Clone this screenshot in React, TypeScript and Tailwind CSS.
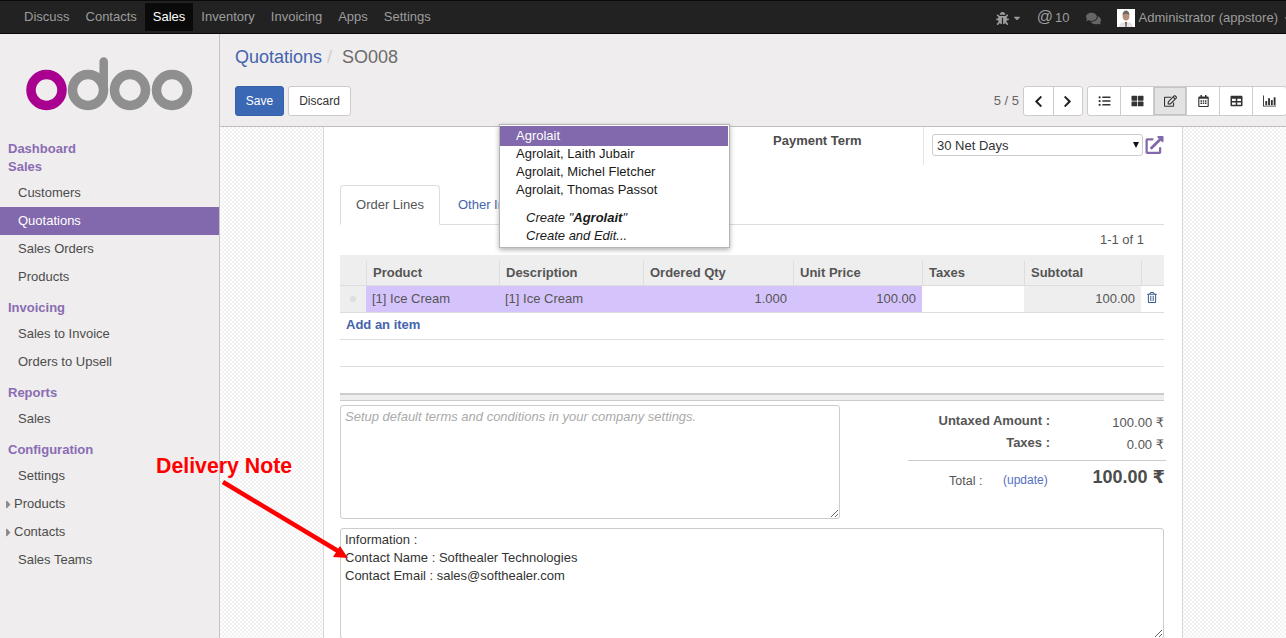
import {
  FaBug,
  FaCaretDown,
  FaCaretRight,
  FaComments,
  FaChevronLeft,
  FaChevronRight,
  FaListUl,
  FaThLarge,
  FaRegEdit,
  FaRegCalendarAlt,
  FaTable,
  FaExternalLinkAlt,
  FaRegTrashAlt,
} from "react-icons/fa";

const topMenu = ["Discuss", "Contacts", "Sales", "Inventory", "Invoicing", "Apps", "Settings"];

function BarChartIcon({ className }: { className?: string }) {
  return (
    <svg viewBox="0 0 14 12" className={className} fill="currentColor">
      <path d="M0 0h1v11h13v1H0z" />
      <rect x="2.500" y="6" width="2" height="4.500" />
      <rect x="5.500" y="3" width="2" height="7.500" />
      <rect x="8.500" y="5" width="2" height="5.500" />
      <rect x="11.500" y="2" width="2" height="8.500" />
    </svg>
  );
}

const views = [
  { icon: FaListUl, active: false },
  { icon: FaThLarge, active: false },
  { icon: FaRegEdit, active: true },
  { icon: FaRegCalendarAlt, active: false },
  { icon: FaTable, active: false },
  { icon: BarChartIcon, active: false },
];

const columns = ["", "Product", "Description", "Ordered Qty", "Unit Price", "Taxes", "Subtotal", ""];

function Logo() {
  return (
    <svg width="168" height="56" viewBox="0 0 168 56" className="block">
      <circle cx="20.5" cy="35" r="15.5" fill="none" stroke="#a9008f" strokeWidth="9.5" />
      <circle cx="62" cy="35" r="15.5" fill="none" stroke="#8f8f8f" strokeWidth="9.5" />
      <line x1="77.7" y1="35" x2="77.7" y2="6.5" stroke="#8f8f8f" strokeWidth="8.5" strokeLinecap="round" />
      <circle cx="104" cy="35" r="15.5" fill="none" stroke="#8f8f8f" strokeWidth="9.5" />
      <circle cx="146" cy="35" r="15.5" fill="none" stroke="#8f8f8f" strokeWidth="9.5" />
    </svg>
  );
}

function Avatar() {
  return (
    <svg width="18" height="18" viewBox="0 0 18 18" className="block">
      <rect width="18" height="18" fill="#ffffff" />
      <path d="M2 18c0-4 3-5 7-5s7 1 7 5z" fill="#e4e4e4" />
      <path d="M8 13h2l-.4 5h-1.200z" fill="#7a5a50" />
      <ellipse cx="9" cy="7" rx="3.400" ry="4.600" fill="#b98f7c" />
      <path d="M5.600 6c0-3 1.500-4.500 3.400-4.500s3.400 1.500 3.400 4.500c-1-1.500-5.800-1.500-6.800 0z" fill="#6d6a66" />
    </svg>
  );
}

function SectionTitle({ label, className = "" }: { label: string; className?: string }) {
  return <div className={`px-2 h-[18px] leading-[18px] font-bold text-[13px] text-[#8a6cb4] ${className}`}>{label}</div>;
}

function MenuItem({ label, active, caret }: { label: string; active?: boolean; caret?: boolean }) {
  return (
    <div
      className={`h-[28px] flex items-center text-[13px] ${caret ? "pl-[3px]" : "pl-[18px]"} ${
        active ? "bg-[#8268ac] text-white" : "text-[#4c4c4c]"
      }`}
    >
      {caret && <FaCaretRight className="w-[11px] h-[13px] text-[#8a8a8a]" />}
      {label}
    </div>
  );
}

function Sidebar() {
  return (
    <aside className="w-[220px] shrink-0 bg-[#efeded] border-r border-[#c4c4c4] flex flex-col">
      <div className="pl-[26px] pt-[21px] pb-[29px]">
        <Logo />
      </div>
      <SectionTitle label="Dashboard" />
      <SectionTitle label="Sales" />
      <div className="mt-[3px]">
        <MenuItem label="Customers" />
        <MenuItem label="Quotations" active />
        <MenuItem label="Sales Orders" />
        <MenuItem label="Products" />
      </div>
      <SectionTitle label="Invoicing" className="mt-[8px]" />
      <div className="mt-[3px]">
        <MenuItem label="Sales to Invoice" />
        <MenuItem label="Orders to Upsell" />
      </div>
      <SectionTitle label="Reports" className="mt-[8px]" />
      <div className="mt-[3px]">
        <MenuItem label="Sales" />
      </div>
      <SectionTitle label="Configuration" className="mt-[8px]" />
      <div className="mt-[3px]">
        <MenuItem label="Settings" />
        <MenuItem label="Products" caret />
        <MenuItem label="Contacts" caret />
        <MenuItem label="Sales Teams" />
      </div>
    </aside>
  );
}

function ControlPanel() {
  return (
    <div className="h-[93px] shrink-0 bg-[#efeded] border-b border-[#bdbdc3] pl-[15px]">
      <div className="h-[46px] flex items-center text-[18px]">
        <span className="text-[#4464ae]">Quotations</span>
        <span className="text-[#cfcfcf] pl-[5px] pr-[10px]">/</span>
        <span className="text-[#6c6c6c]">SO008</span>
      </div>
      <div className="mt-[6px] flex items-center justify-between">
        <div className="flex gap-[4px] text-[12px]">
          <button className="w-[49px] h-[30px] rounded-[3px] bg-[#3b68b5] border border-[#3560aa] text-white">Save</button>
          <button className="w-[63px] h-[30px] rounded-[3px] bg-white border border-[#cccccc] text-[#333333]">Discard</button>
        </div>
        <div className="flex items-center text-[13px] text-[#666666]">
          <span className="mr-[4px]">5 / 5</span>
          <div className="flex h-[30px] w-[60px] bg-white border border-[#cccccc] rounded-[3px] mr-[4px]">
            <div className="flex-1 flex items-center justify-center border-r border-[#cccccc]">
              <FaChevronLeft className="w-[13px] h-[13px] text-[#222222]" />
            </div>
            <div className="flex-1 flex items-center justify-center">
              <FaChevronRight className="w-[13px] h-[13px] text-[#222222]" />
            </div>
          </div>
          <div className="flex h-[30px] bg-white border border-[#cccccc] rounded-[3px] mr-[-1px]">
            {views.map(({ icon: Icon, active }, i) => (
              <div
                key={i}
                className={`w-[33px] flex items-center justify-center ${i < 5 ? "border-r border-[#cccccc]" : ""} ${
                  active ? "bg-[#e3e3e3] shadow-[inset_0_0_0_1px_#c4c4c4]" : ""
                }`}
              >
                <Icon className="w-[13px] h-[12px] text-[#333333]" />
              </div>
            ))}
          </div>
        </div>
      </div>
    </div>
  );
}

function Autocomplete() {
  return (
    <div className="absolute left-[499px] top-[124px] w-[231px] h-[124px] bg-white border border-[#b5b5b5] shadow-[0_2px_5px_rgba(0,0,0,0.3)] pt-[1px] text-[13px] text-[#1a1a1a] leading-[18px] z-10">
      <div className="h-[20px] leading-[19px] pl-[16px] mr-[1px] mb-[-1px] bg-[#8268ac] text-white">Agrolait</div>
      <div className="pl-[16px]">Agrolait, Laith Jubair</div>
      <div className="pl-[16px]">Agrolait, Michel Fletcher</div>
      <div className="pl-[16px]">Agrolait, Thomas Passot</div>
      <div className="pl-[26px] mt-[10px] italic">
        Create "<b>Agrolait</b>"
      </div>
      <div className="pl-[26px] italic">Create and Edit...</div>
    </div>
  );
}

function OrderLines() {
  const grid = "grid grid-cols-[26px_133px_144px_150px_129px_102px_117px_23px]";
  return (
    <div className="mt-[6px] text-[13px]">
      <div className={`${grid} h-[31px] bg-[#eeeeee] border-b border-[#dddddd] pt-[6px]`}>
        {columns.map((c, i) => (
          <div key={i} className={`px-[6px] font-bold text-[#555555] leading-[23px] ${i > 0 ? "border-l border-[#dddddd]" : ""}`}>
            {c}
          </div>
        ))}
      </div>
      <div className={`${grid} h-[27px] border-b border-[#dddddd] text-[#555555] leading-[25px]`}>
        <div className="bg-[#eeeeee] flex items-center justify-center">
          <span className="w-[6px] h-[6px] rounded-full bg-[#dddddd]" />
        </div>
        <div className="bg-[#d5c4fc] px-[6px]">[1] Ice Cream</div>
        <div className="bg-[#d5c4fc] px-[6px]">[1] Ice Cream</div>
        <div className="bg-[#d5c4fc] px-[6px] text-right">1.000</div>
        <div className="bg-[#d5c4fc] px-[6px] text-right">100.00</div>
        <div />
        <div className="bg-[#eeeeee] px-[6px] text-right">100.00</div>
        <div className="flex items-center justify-center pb-[3px] pr-[1px]">
          <FaRegTrashAlt className="w-[10px] h-[11px] text-[#3d5c8e]" />
        </div>
      </div>
      <div className="h-[27px] border-b border-[#dddddd] px-[6px] leading-[24px] font-bold text-[#4464ae]">Add an item</div>
      <div className="h-[27px] border-b border-[#dddddd]" />
      <div className="h-[8px] mt-[26px] border-t-[2px] border-b border-t-[#cccccc] border-b-[#cccccc] bg-[#eeeeee]" />
    </div>
  );
}

function Rupee() {
  return <span className="font-['DejaVu_Sans',sans-serif]">₹</span>;
}

function Totals() {
  return (
    <div className="w-[258px] text-[13px] text-[#555555] mr-[-2px]">
      <div className="h-[20px] mt-[6px] flex">
        <div className="w-[142px] text-right font-bold">Untaxed Amount :</div>
        <div className="w-[116px] pr-[2px] pt-[2px] text-right">
          100.00 <Rupee />
        </div>
      </div>
      <div className="h-[20px] mt-[2px] flex">
        <div className="w-[142px] text-right font-bold">Taxes :</div>
        <div className="w-[116px] pr-[2px] pt-[2px] text-right">
          0.00 <Rupee />
        </div>
      </div>
      <div className="border-t border-[#cccccc] mt-[7px] pt-[5px] flex items-start">
        <div className="w-[41px] ml-[41px] mt-[6px] text-[12.500px] whitespace-nowrap">Total :</div>
        <div className="ml-[13px] mt-[5px] text-[12px] text-[#5470c0]">(update)</div>
        <div className="ml-auto mt-[-3px] pr-[1px] text-[18px] font-bold text-[#4c4c4c]">
          100.00 <Rupee />
        </div>
      </div>
    </div>
  );
}

function Sheet() {
  return (
    <div className="relative w-[860px] ml-[103px] bg-white border-x border-[#d8d8d8] pl-[16px] pr-[18px] h-full">
      <div className="h-[38px] pl-[433px] pt-[4px] text-[13px] font-bold text-[#4c4c4c] whitespace-nowrap">Payment Term</div>
      <div className="absolute left-[599px] top-0 h-[38px] border-l border-[#e5e5e5] pl-[8px] pt-[7px] flex items-start">
        <div className="relative w-[211px] h-[22px]">
          <select className="block appearance-none w-full h-full bg-white border border-[#cccccc] rounded-[3px] text-[13px] text-[#333333] pl-[4px] pt-[1px]" defaultValue="30">
            <option value="30">30 Net Days</option>
          </select>
          <svg className="absolute right-[4px] top-[8px]" width="6" height="6" viewBox="0 0 6 6">
            <path d="M0 0h6L3 6z" fill="#111111" />
          </svg>
        </div>
        <FaExternalLinkAlt className="ml-[2px] mt-[2px] w-[19px] h-[18px] text-[#8268ac]" />
      </div>

      <div className="mt-[20px] h-[40px] border-b border-[#dddddd] flex text-[13px]">
        <div className="w-[100px] h-[40px] bg-white border border-[#dddddd] border-b-white rounded-t-[4px] text-center leading-[38px] text-[#555555]">
          Order Lines
        </div>
        <div className="pl-[18px] leading-[40px] text-[#4464ae]">Other Information</div>
      </div>
      <div className="h-[24px] pt-[6px] pr-[20px] text-right text-[13px] leading-[18px] text-[#555555]">1-1 of 1</div>

      <OrderLines />

      <div className="flex justify-between mt-[4px]">
        <textarea
          className="block w-[500px] h-[114px] border border-[#cccccc] rounded-[3px] px-[4px] py-[2px] text-[13px] leading-[18px] italic placeholder:text-[#aaaaaa]"
          placeholder="Setup default terms and conditions in your company settings."
        />
        <Totals />
      </div>
      <textarea
        className="block mt-[9px] w-[824px] h-[111px] border border-[#cccccc] rounded-[3px] px-[4px] py-[2px] text-[13px] leading-[18px] text-[#333333]"
        defaultValue={"Information :\nContact Name : Softhealer Technologies\nContact Email : sales@softhealer.com"}
      />
    </div>
  );
}

export default function App() {
  return (
    <div className="relative h-screen overflow-hidden flex flex-col font-['Liberation_Sans',Arial,sans-serif] bg-white">
      <nav className="h-[34px] shrink-0 bg-[#222222] border-y border-[#0a0a0a] flex items-center justify-between text-[13px] text-[#9d9d9d]">
        <div className="flex items-center pl-[16px] h-full">
          {topMenu.map((m) => (
            <div
              key={m}
              className={`h-[28px] leading-[28px] px-[8px] ${m === "Sales" ? "bg-[#0a0a0a] text-white" : ""}`}
            >
              {m}
            </div>
          ))}
        </div>
        <div className="flex items-center whitespace-nowrap pt-[2px] mr-[1px]">
          <FaBug className="w-[13px] h-[13px]" />
          <FaCaretDown className="ml-[3px] w-[10px] h-[10px]" />
          <span className="ml-[15px] text-[16px] leading-[16px] pb-[2px]">@</span>
          <span className="ml-[2px]">10</span>
          <FaComments className="ml-[16px] w-[15px] h-[15px] text-[#666666]" />
          <span className="ml-[16px]">
            <Avatar />
          </span>
          <span className="ml-[4px]">Administrator (appstore)</span>
          <FaCaretDown className="ml-[5px] w-[9px] h-[9px] mr-[-7px]" />
        </div>
      </nav>
      <div className="flex flex-1 min-h-0">
        <Sidebar />
        <main className="flex-1 min-w-0 flex flex-col">
          <ControlPanel />
          <div className="flex-1 min-h-0 overflow-hidden bg-[repeating-conic-gradient(#f1f1f1_0_25%,#ffffff_0_50%)] bg-[length:4px_4px]">
            <Sheet />
          </div>
        </main>
      </div>

      <Autocomplete />

      <div className="absolute left-[156px] top-[453px] text-[21.3px] leading-[26px] font-bold text-[#ff0000]">Delivery Note</div>
      <svg className="absolute left-0 top-0 pointer-events-none" width="1286" height="638">
        <line x1="223" y1="482" x2="338" y2="551" stroke="#ff0000" strokeWidth="4.500" />
        <polygon points="348,558 333,557 340,546" fill="#ff0000" />
      </svg>
    </div>
  );
}
